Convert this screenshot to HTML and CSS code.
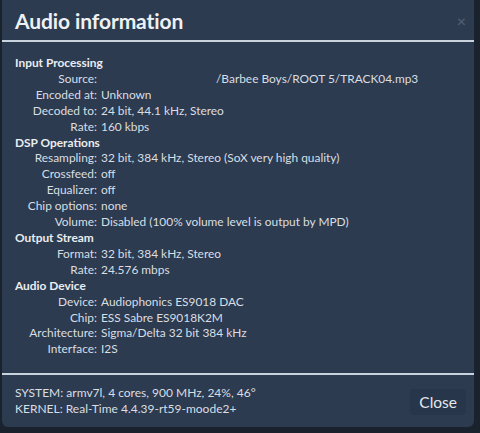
FILE: index.html
```html
<!DOCTYPE html>
<html>
<head>
<meta charset="utf-8">
<link rel="stylesheet" href="styles.css">
</head>
<body>
<div class="modal">
  <div class="header">
    <h1 class="title">Audio information</h1>
    <span class="x">&times;</span>
  </div>
  <div class="body">
    <div class="sec">Input Processing</div>
    <div class="row"><span class="k">Source:</span><span class="v"><span class="path">/Barbee Boys/ROOT 5/TRACK04.mp3</span></span></div>
    <div class="row"><span class="k">Encoded at:</span><span class="v">Unknown</span></div>
    <div class="row"><span class="k">Decoded to:</span><span class="v">24 bit, 44.1 kHz, Stereo</span></div>
    <div class="row"><span class="k">Rate:</span><span class="v">160 kbps</span></div>
    <div class="sec">DSP Operations</div>
    <div class="row"><span class="k">Resampling:</span><span class="v">32 bit, 384 kHz, Stereo (SoX very high quality)</span></div>
    <div class="row"><span class="k">Crossfeed:</span><span class="v">off</span></div>
    <div class="row"><span class="k">Equalizer:</span><span class="v">off</span></div>
    <div class="row"><span class="k">Chip options:</span><span class="v">none</span></div>
    <div class="row"><span class="k">Volume:</span><span class="v">Disabled (100% volume level is output by MPD)</span></div>
    <div class="sec">Output Stream</div>
    <div class="row"><span class="k">Format:</span><span class="v">32 bit, 384 kHz, Stereo</span></div>
    <div class="row"><span class="k">Rate:</span><span class="v">24.576 mbps</span></div>
    <div class="sec">Audio Device</div>
    <div class="row"><span class="k">Device:</span><span class="v">Audiophonics ES9018 DAC</span></div>
    <div class="row"><span class="k">Chip:</span><span class="v">ESS Sabre ES9018K2M</span></div>
    <div class="row"><span class="k">Architecture:</span><span class="v">Sigma/Delta 32 bit 384 kHz</span></div>
    <div class="row"><span class="k">Interface:</span><span class="v">I2S</span></div>
  </div>
  <div class="footer">
    <div class="sys">
      <div>SYSTEM: armv7l, 4 cores, 900 MHz, 24%, 46°</div>
      <div>KERNEL: Real-Time 4.4.39-rt59-moode2+</div>
    </div>
    <button class="close">Close</button>
  </div>
</div>
</body>
</html>
```
FILE: styles.css
```css
html, body {
  margin: 0;
  padding: 0;
  background: #1a222d;
  height: 433px;
  overflow: hidden;
}
body {
  font-family: Lato, "Open Sans", sans-serif;
  color: #d9dee4;
}
.modal {
  margin: 0 6px 0 2px;
  height: 427px;
  background: #2c3b4f;
  border-radius: 0 0 6px 6px;
  display: flex;
  flex-direction: column;
  box-sizing: border-box;
}
.header {
  height: 40px;
  border-bottom: 2px solid #c9d3de;
  display: flex;
  align-items: center;
  justify-content: space-between;
  padding: 0 8px 0 13px;
  flex: none;
}
.title {
  margin: 0;
  font-size: 21px;
  font-weight: 700;
  color: #eef1f4;
  letter-spacing: -0.1px;
}
.x {
  color: #4b5a6d;
  font-size: 16px;
  font-weight: 700;
}
.body {
  flex: 1;
  padding: 13px 0 0 13px;
  font-size: 11.9px;
  line-height: 15.9px;
}
.sec {
  font-weight: 700;
  color: #e9edf1;
}
.row {
  display: grid;
  grid-template-columns: 82px 1fr;
  column-gap: 4px;
}
.k {
  text-align: right;
}
.path {
  margin-left: 115px;
}
.footer {
  flex: none;
  height: 52px;
  border-top: 2px solid #c9d3de;
  display: flex;
  align-items: center;
  justify-content: space-between;
  padding: 0 8px 0 13px;
  font-size: 12px;
  line-height: 16px;
}
.close {
  font-family: Lato, "Open Sans", sans-serif;
  font-size: 15.5px;
  color: #e4e8ec;
  background: #27364a;
  border: none;
  border-radius: 4px;
  padding: 0 9px;
  height: 26px;
  margin-top: 2px;
}
```
